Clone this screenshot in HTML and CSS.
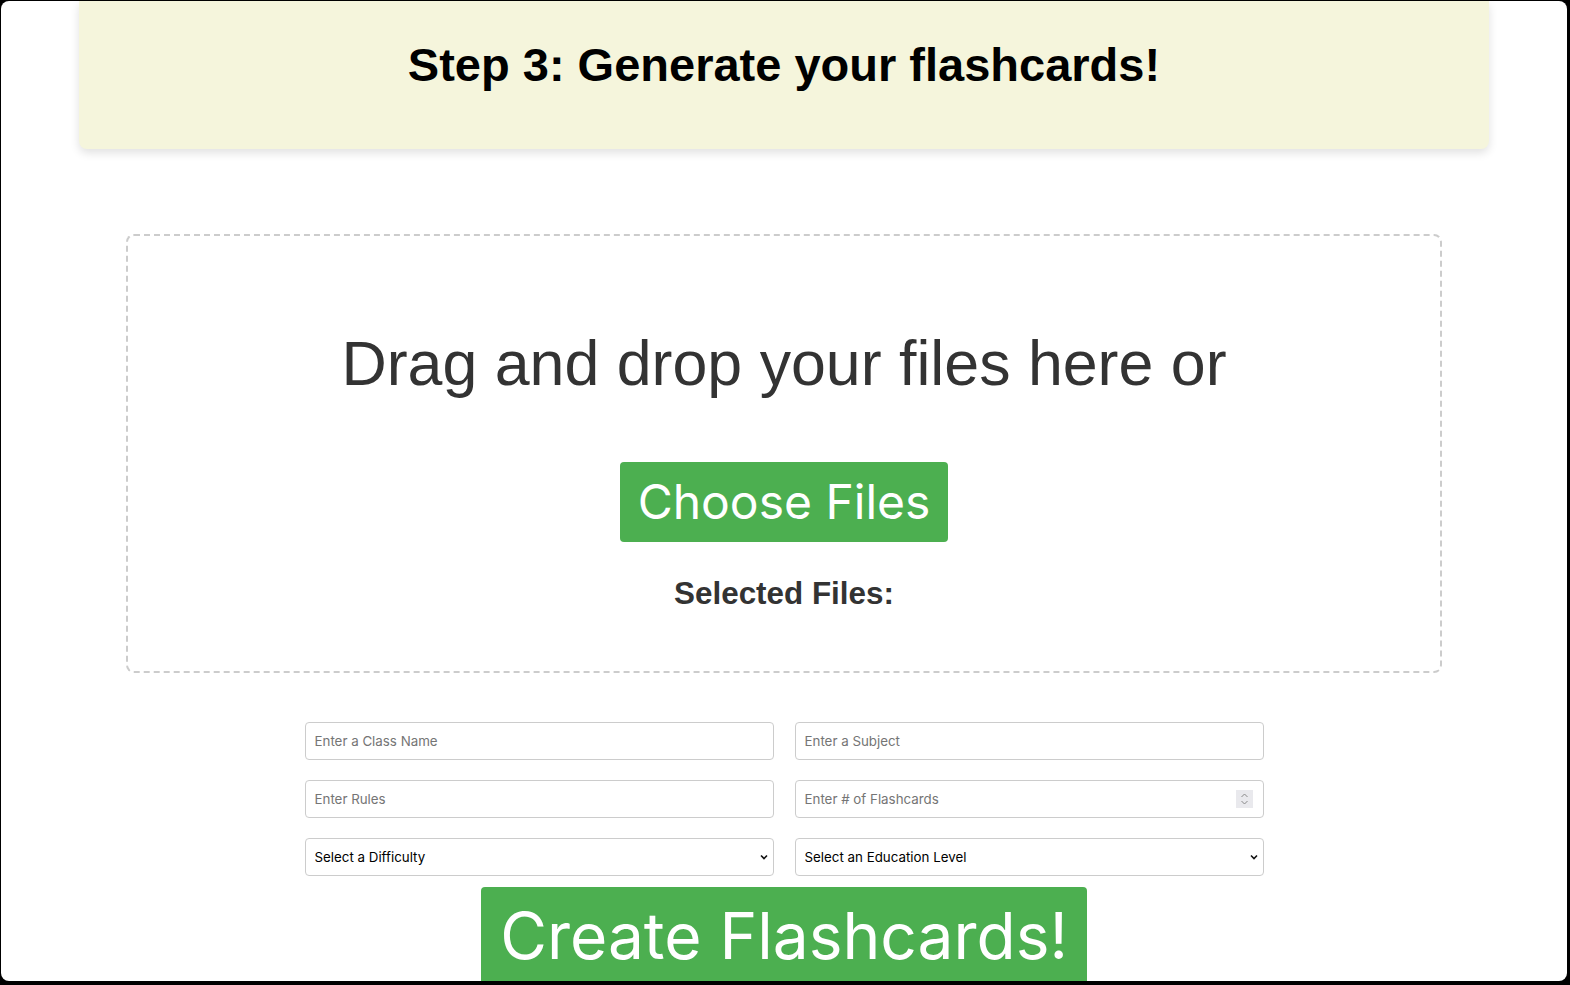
FILE: index.html
```html
<!DOCTYPE html>
<html>
<head>
<meta charset="utf-8">
<link rel="stylesheet" href="styles.css">
</head>
<body>
<div class="frame">
  <header class="step-card">
    <h1 class="step-title">Step 3: Generate your flashcards!</h1>
  </header>
  <section class="dropzone">
    <p class="drop-text">Drag and drop your files here or</p>
    <label class="choose-btn">Choose Files</label>
    <h3 class="selected">Selected Files:</h3>
  </section>
  <form class="fields">
    <input class="field" type="text" placeholder="Enter a Class Name">
    <input class="field" type="text" placeholder="Enter a Subject">
    <input class="field" type="text" placeholder="Enter Rules">
    <div class="num-wrap">
      <input class="field" type="text" placeholder="Enter # of Flashcards">
      <span class="spinner"><svg width="9" height="14" viewBox="0 0 9 14"><path d="M1.5 5 L4.5 2 L7.5 5" fill="none" stroke="#8a8a8a" stroke-width="1"/><path d="M1.5 9 L4.5 12 L7.5 9" fill="none" stroke="#8a8a8a" stroke-width="1"/></svg></span>
    </div>
    <div class="sel-wrap">
      <select class="field select"><option>Select a Difficulty</option></select>
      <svg class="chev" width="8" height="6" viewBox="0 0 8 6"><path d="M1 1.5 L4 4.5 L7 1.5" fill="none" stroke="#111" stroke-width="1.6"/></svg>
    </div>
    <div class="sel-wrap">
      <select class="field select"><option>Select an Education Level</option></select>
      <svg class="chev" width="8" height="6" viewBox="0 0 8 6"><path d="M1 1.5 L4 4.5 L7 1.5" fill="none" stroke="#111" stroke-width="1.6"/></svg>
    </div>
  </form>
  <button class="create-btn">Create Flashcards!</button>
</div>
</body>
</html>
```
FILE: styles.css
```css
html, body {
  margin: 0;
  padding: 0;
  background: #000;
  height: 985px;
  overflow: hidden;
}
.frame {
  margin: 1px 3px 0 1px;
  height: 980px;
  background: #fff;
  border-radius: 8px;
  overflow: hidden;
  display: flex;
  flex-direction: column;
  align-items: center;
  font-family: "Liberation Sans", Arial, sans-serif;
}
.step-card {
  width: 90%;
  height: 148px;
  box-sizing: border-box;
  background: #f5f5dc;
  border-radius: 0 0 8px 8px;
  box-shadow: 0 4px 10px rgba(0, 0, 0, 0.12);
  padding-top: 36px;
  flex-shrink: 0;
}
.step-title {
  margin: 0;
  text-align: center;
  font-size: 47px;
  line-height: 56px;
  font-weight: bold;
  color: #000;
}
.dropzone {
  margin-top: 85px;
  width: 1316px;
  height: 439px;
  box-sizing: border-box;
  border: 2px dashed #ccc;
  border-radius: 8px;
  display: flex;
  flex-direction: column;
  align-items: center;
  padding-top: 90px;
  flex-shrink: 0;
}
.drop-text {
  margin: 0;
  font-size: 62.7px;
  line-height: 74px;
  color: #333;
}
.choose-btn {
  margin-top: 62px;
  background: #4caf50;
  color: #fff;
  font-family: Inter, "Liberation Sans", sans-serif;
  font-size: 48px;
  line-height: 58px;
  padding: 11px 18px;
  border-radius: 4px;
  cursor: pointer;
}
.selected {
  margin: 33px 0 0;
  font-size: 31.4px;
  line-height: 37px;
  font-weight: bold;
  color: #333;
}
.fields {
  margin-top: 49px;
  width: 959px;
  display: grid;
  grid-template-columns: 1fr 1fr;
  column-gap: 21px;
  row-gap: 20px;
  flex-shrink: 0;
}
.field {
  width: 100%;
  height: 38px;
  box-sizing: border-box;
  border: 1px solid #ccc;
  border-radius: 4px;
  padding: 0 9px;
  font-family: Inter, "Liberation Sans", sans-serif;
  font-size: 13.33px;
  color: #000;
  background: #fff;
  outline: none;
}
.field::placeholder {
  color: #757575;
}
.num-wrap,
.sel-wrap {
  position: relative;
}
.select {
  appearance: none;
  -webkit-appearance: none;
  padding: 0 9px;
}
.chev {
  position: absolute;
  right: 6px;
  top: 16px;
  pointer-events: none;
}
.spinner {
  position: absolute;
  right: 11px;
  top: 10px;
  width: 17px;
  height: 18px;
  background: #e9e9ed;
  display: flex;
  align-items: center;
  justify-content: center;
}
.create-btn {
  margin-top: 11px;
  background: #4caf50;
  color: #fff;
  border: none;
  border-radius: 4px;
  font-family: Inter, "Liberation Sans", sans-serif;
  font-size: 64px;
  line-height: 78px;
  padding: 10px 19px;
  flex-shrink: 0;
  cursor: pointer;
}
```
